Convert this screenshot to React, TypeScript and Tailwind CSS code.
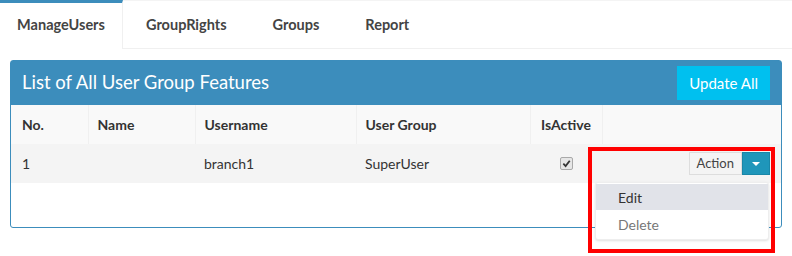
import { useState } from "react";

const tabs = ["ManageUsers", "GroupRights", "Groups", "Report"];

export default function App() {
  const [active, setActive] = useState(0);

  return (
    <div className="w-[792px] h-[256px] bg-white relative overflow-hidden font-['Lato',sans-serif] text-[#333]">
      {/* Tabs */}
      <div className="flex h-[49px] border-b border-[#f0f0f0] border-t border-t-[#f4f4f4]">
        {tabs.map((t, i) => (
          <button
            key={t}
            onClick={() => setActive(i)}
            className={`h-[49px] -mt-px text-[14.5px] font-bold text-[#444] ${
              i === active
                ? "w-[123px] border-t-[3px] border-t-[#3c8dbc] border-r border-r-[#f0f0f0] bg-white -mb-px pb-[2px]"
                : "px-[23px] pt-[1px]"
            }`}
          >
            {t}
          </button>
        ))}
      </div>

      {/* Panel */}
      <div className="mx-[10px] mt-[11px] w-[772px] h-[168px] border border-[#3c8dbc] rounded-[3px]">
        <div className="h-[44px] bg-[#3c8dbc] flex items-center justify-between pl-[11px] pr-[11px]">
          <span className="text-[18.5px] text-white">List of All User Group Features</span>
          <button className="h-[34px] px-[12px] bg-[#00c0ef] text-white text-[15px]">Update All</button>
        </div>
        <table className="w-full border-collapse text-[14px]">
          <thead>
            <tr className="h-[39px] bg-[#f9f9f9] text-left">
              <th className="w-[77px] pl-[11px] font-bold">No.</th>
              <th className="w-[107px] pl-[9px] border-l border-[#f0f0f0] font-bold">Name</th>
              <th className="w-[161px] pl-[9px] border-l border-[#f0f0f0] font-bold">Username</th>
              <th className="w-[174px] pl-[9px] border-l border-[#f0f0f0] font-bold">User Group</th>
              <th className="w-[72px] text-center border-l border-[#f0f0f0] font-bold">IsActive</th>
              <th className="border-l border-[#f0f0f0]"></th>
            </tr>
          </thead>
          <tbody>
            <tr className="h-[39px] bg-[#f4f4f4]">
              <td className="pl-[11px]">1</td>
              <td className="pl-[9px]"></td>
              <td className="pl-[9px]">branch1</td>
              <td className="pl-[9px]">SuperUser</td>
              <td>
                <div className="flex justify-center">
                  <span className="w-[13px] h-[13px] rounded-[2px] border border-[#a9a9a9] bg-[#e6e6e6] flex items-center justify-center">
                    <svg width="9" height="9" viewBox="0 0 10 10">
                      <path d="M1.5 5.2 L4 7.8 L8.6 2" fill="none" stroke="#333" strokeWidth="2" />
                    </svg>
                  </span>
                </div>
              </td>
              <td className="pr-[11px]">
                <div className="flex justify-end">
                  <button className="h-[23px] px-[7px] bg-[#f4f4f4] border border-[#ddd] text-[13px] text-[#444]">Action</button>
                  <button className="h-[23px] w-[28px] bg-[#1f96ba] border border-[#1a87a8] flex items-center justify-center">
                    <span className="w-0 h-0 border-l-[4px] border-r-[4px] border-t-[4px] border-l-transparent border-r-transparent border-t-white" />
                  </button>
                </div>
              </td>
            </tr>
          </tbody>
        </table>
      </div>

      {/* Dropdown menu */}
      <div className="absolute left-[595px] top-[182px] w-[174px] bg-white border border-[#eee] rounded-[3px] shadow-sm py-[1px] text-[14px]">
        <div className="h-[26px] flex items-center pl-[22px] bg-[#e1e3e9] text-[#333]">Edit</div>
        <div className="h-[28px] flex items-center pl-[22px] text-[#777]">Delete</div>
      </div>

      {/* Annotation box */}
      <div className="absolute left-[588px] top-[147px] w-[187px] h-[106px] border-[4px] border-[#ff0000] pointer-events-none" />
    </div>
  );
}
